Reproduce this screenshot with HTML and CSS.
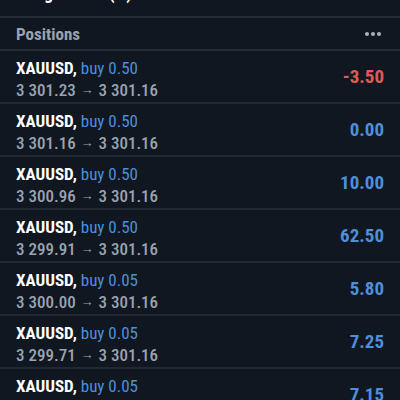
FILE: index.html
```html
<!DOCTYPE html>
<html>
<head>
<meta charset="utf-8">
<link rel="stylesheet" href="styles.css">
</head>
<body>
<div class="app">
  <div class="topbar"><span class="toptitle">Margin level (%)</span></div>
  <div class="section">
    <span class="section-title">Positions</span>
    <span class="more"><i></i><i></i><i></i></span>
  </div>
  <div class="list">
    <div class="row">
      <div class="info">
        <div class="line1"><span class="sym">XAUUSD,</span> <span class="side">buy 0.50</span></div>
        <div class="line2">3 301.23 <span class="arrow">→</span> 3 301.16</div>
      </div>
      <div class="profit neg">-3.50</div>
    </div>
    <div class="row">
      <div class="info">
        <div class="line1"><span class="sym">XAUUSD,</span> <span class="side">buy 0.50</span></div>
        <div class="line2">3 301.16 <span class="arrow">→</span> 3 301.16</div>
      </div>
      <div class="profit">0.00</div>
    </div>
    <div class="row">
      <div class="info">
        <div class="line1"><span class="sym">XAUUSD,</span> <span class="side">buy 0.50</span></div>
        <div class="line2">3 300.96 <span class="arrow">→</span> 3 301.16</div>
      </div>
      <div class="profit">10.00</div>
    </div>
    <div class="row">
      <div class="info">
        <div class="line1"><span class="sym">XAUUSD,</span> <span class="side">buy 0.50</span></div>
        <div class="line2">3 299.91 <span class="arrow">→</span> 3 301.16</div>
      </div>
      <div class="profit">62.50</div>
    </div>
    <div class="row">
      <div class="info">
        <div class="line1"><span class="sym">XAUUSD,</span> <span class="side">buy 0.05</span></div>
        <div class="line2">3 300.00 <span class="arrow">→</span> 3 301.16</div>
      </div>
      <div class="profit">5.80</div>
    </div>
    <div class="row">
      <div class="info">
        <div class="line1"><span class="sym">XAUUSD,</span> <span class="side">buy 0.05</span></div>
        <div class="line2">3 299.71 <span class="arrow">→</span> 3 301.16</div>
      </div>
      <div class="profit">7.25</div>
    </div>
    <div class="row">
      <div class="info">
        <div class="line1"><span class="sym">XAUUSD,</span> <span class="side">buy 0.05</span></div>
        <div class="line2">3 299.73 <span class="arrow">→</span> 3 301.16</div>
      </div>
      <div class="profit">7.15</div>
    </div>
  </div>
</div>
</body>
</html>
```
FILE: styles.css
```css
html, body {
  margin: 0;
  padding: 0;
  background: #111720;
  height: 400px;
  overflow: hidden;
}
.app {
  font-family: Roboto, "Noto Sans", sans-serif;
  font-stretch: 80%;
  color: #ffffff;
}
.topbar {
  height: 16px;
  overflow: hidden;
  display: flex;
  align-items: flex-start;
  padding: 0 16px;
  border-bottom: 2px solid #262d37;
}
.toptitle {
  font-size: 18px;
  font-weight: 700;
  line-height: 18px;
  margin-top: -16px;
  color: #fff;
}
.section {
  height: 31px;
  display: flex;
  align-items: center;
  justify-content: space-between;
  padding: 0 16px;
  border-bottom: 2px solid #262d37;
}
.section-title {
  font-size: 17px;
  font-weight: 700;
  color: #98a3b0;
}
.more {
  display: flex;
  gap: 2px;
  margin-right: 3px;
}
.more i {
  width: 4px;
  height: 4px;
  border-radius: 50%;
  background: #a9b2bd;
}
.row {
  height: 51px;
  display: flex;
  align-items: center;
  justify-content: space-between;
  padding: 0 16px;
  border-bottom: 2px solid #222933;
}
.info {
  display: flex;
  flex-direction: column;
  margin-top: 6px;
}
.line1, .line2 {
  font-size: 17px;
  line-height: 22px;
}
.sym {
  font-weight: 700;
  color: #ffffff;
}
.side {
  color: #4d8fdc;
}
.line2 {
  color: #9aa4b0;
  font-weight: 500;
}
.arrow {
  font-size: 13px;
  position: relative;
  top: -2px;
  margin: 0 1px;
}
.profit {
  font-size: 19px;
  font-weight: 700;
  color: #4d8fdc;
}
.profit.neg {
  color: #e15a5a;
}
```
